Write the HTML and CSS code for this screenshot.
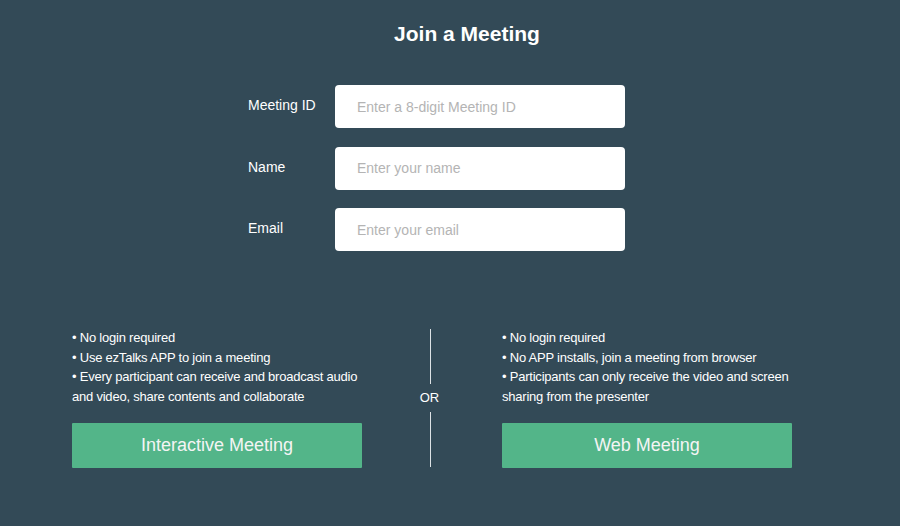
FILE: index.html
```html
<!DOCTYPE html>
<html lang="en">
<head>
  <meta charset="UTF-8">
  <title>Join a Meeting</title>
  <link rel="stylesheet" href="styles.css">
</head>
<body>
<div id="page">
  <h1 class="title">Join a Meeting</h1>

  <div class="form">
    <div class="row">
      <label class="label">Meeting ID</label>
      <input class="field" type="text" placeholder="Enter a 8-digit Meeting ID">
    </div>
    <div class="row">
      <label class="label">Name</label>
      <input class="field" type="text" placeholder="Enter your name">
    </div>
    <div class="row">
      <label class="label">Email</label>
      <input class="field" type="text" placeholder="Enter your email">
    </div>
  </div>

  <div class="choices">
    <div class="choice">
      <div class="points">
        • No login required<br>
        • Use ezTalks APP to join a meeting<br>
        • Every participant can receive and broadcast audio and video, share contents and collaborate
      </div>
      <button class="go">Interactive Meeting</button>
    </div>

    <div class="divider">
      <div class="line"></div>
      <div class="or">OR</div>
      <div class="line"></div>
    </div>

    <div class="choice">
      <div class="points">
        • No login required<br>
        • No APP installs, join a meeting from browser<br>
        • Participants can only receive the video and screen sharing from the presenter
      </div>
      <button class="go">Web Meeting</button>
    </div>
  </div>
</div>
</body>
</html>
```

FILE: styles.css
```css
body {
  margin: 0;
  background-color: #334a57;
  font-family: "Liberation Sans", Arial, sans-serif;
  color: #ffffff;
}

#page {
  width: 900px;
  height: 526px;
  overflow: hidden;
}

.title {
  margin: 0;
  padding-top: 22px;
  padding-left: 34px;
  text-align: center;
  font-size: 21px;
  line-height: 24px;
  font-weight: bold;
}

.form {
  margin-top: 39px;
  margin-left: 248px;
  display: flex;
  flex-direction: column;
  gap: 18.5px;
}

.row {
  display: flex;
  align-items: center;
}

.label {
  width: 87px;
  font-size: 14px;
  line-height: 18px;
  margin-top: -3px;
}

.field {
  width: 290px;
  height: 43px;
  box-sizing: border-box;
  border: none;
  border-radius: 4px;
  background-color: #ffffff;
  padding: 0 22px;
  font-family: "Liberation Sans", Arial, sans-serif;
  font-size: 14px;
  color: #333333;
  outline: none;
}

.field::placeholder {
  color: #b4b4b4;
}

.choices {
  margin-top: 77px;
  margin-left: 72px;
  display: flex;
  align-items: flex-start;
}

.choice {
  width: 290px;
  display: flex;
  flex-direction: column;
}

.points {
  font-size: 13px;
  line-height: 19.5px;
  letter-spacing: -0.22px;
  height: 78px;
}

.go {
  margin-top: 17px;
  height: 45px;
  border: none;
  border-radius: 1px;
  background-color: #53b589;
  color: #f4f4f4;
  font-family: "Liberation Sans", Arial, sans-serif;
  font-size: 18px;
  cursor: pointer;
}

.divider {
  width: 140px;
  box-sizing: border-box;
  padding-right: 4px;
  display: flex;
  flex-direction: column;
  align-items: center;
  margin-top: 1px;
}

.line {
  width: 1px;
  height: 55px;
  background-color: #dde2e5;
}

.or {
  font-size: 13px;
  line-height: 28px;
  margin-left: -1px;
}
```
